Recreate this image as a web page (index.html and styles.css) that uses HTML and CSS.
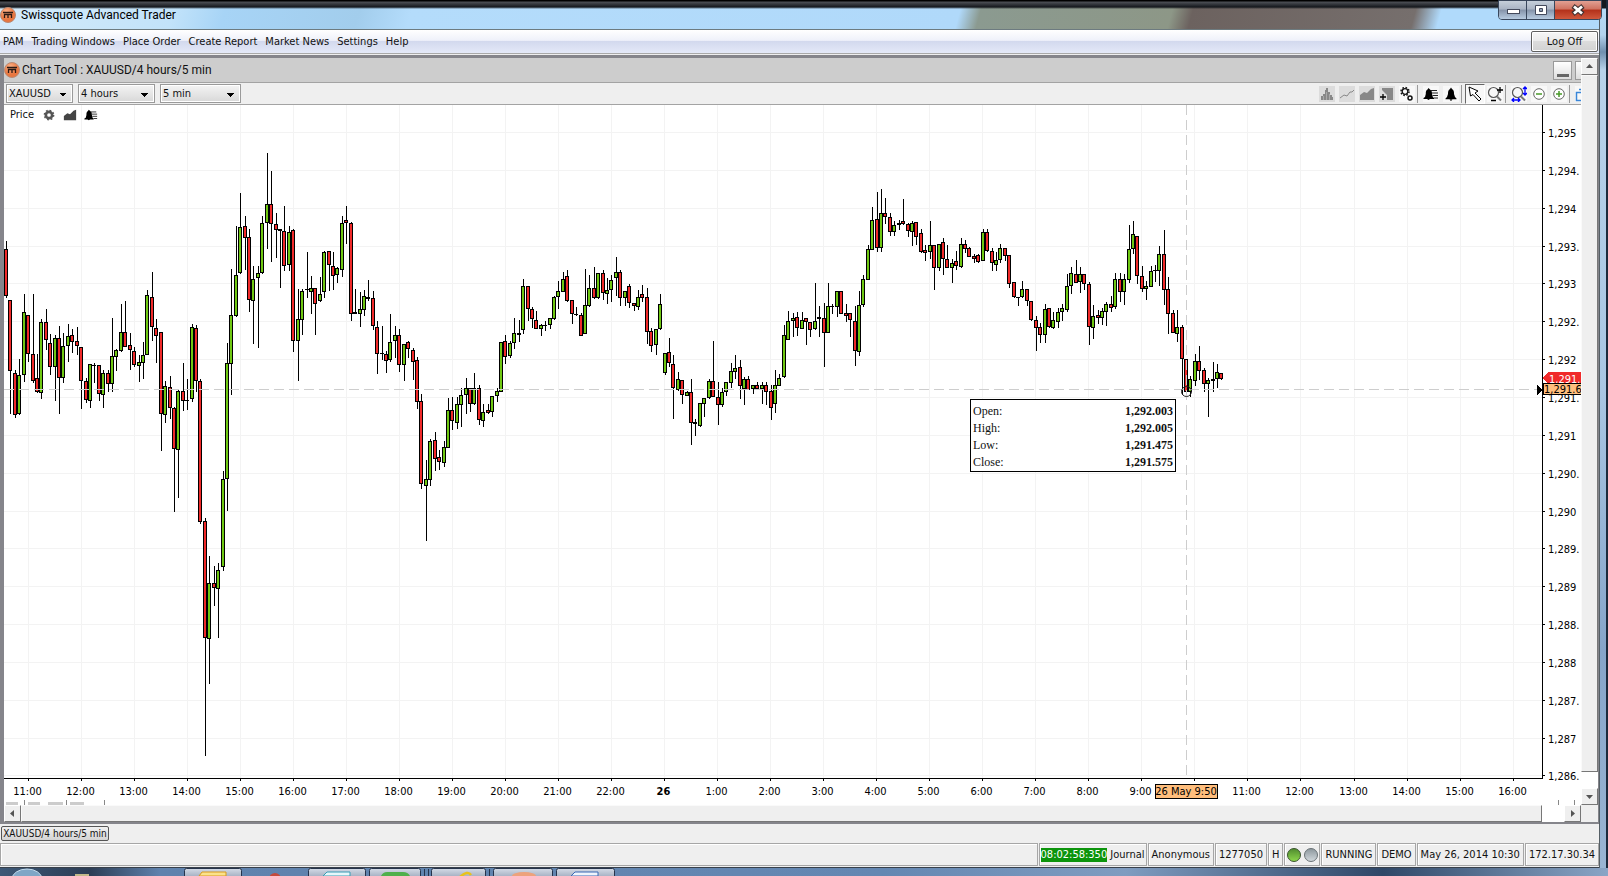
FILE: index.html
```html
<!DOCTYPE html>
<html lang="en">
<head>
<meta charset="utf-8">
<title>Swissquote Advanced Trader</title>
<link rel="stylesheet" href="styles.css">
</head>
<body>
<svg class="defs" aria-hidden="true">
  <defs>
    <radialGradient id="orange" cx="40%" cy="30%"><stop offset="0" stop-color="#ffb48a"/><stop offset="1" stop-color="#e8763f"/></radialGradient>
    <linearGradient id="green" x2="0" y2="1"><stop offset="0" stop-color="#4f8a2f"/><stop offset="1" stop-color="#8ed84c"/></linearGradient>
    <linearGradient id="silver" x2="0" y2="1"><stop offset="0" stop-color="#8b969c"/><stop offset="1" stop-color="#d3dade"/></linearGradient>
    <linearGradient id="taskbtn" x2="0" y2="1"><stop offset="0" stop-color="#d4dbe6"/><stop offset="1" stop-color="#8e9cb2"/></linearGradient>
    <symbol id="logo" viewBox="0 0 16 16"><circle cx="8" cy="8" r="7.500" fill="url(#orange)" stroke="#b98a74"/><path d="M3 5.500h10M4.500 7v4M8 7v4M11.500 7v4M4 7.500h8" stroke="#2b1a14" stroke-width="1.300" fill="none"/></symbol>
    <symbol id="bell" viewBox="0 0 16 16"><path d="M8 1.500 9 3c2 1 2 3 2 5l1 3 1.500 1.500v.8h-11v-.8L4 11l1-3c0-2 0-4 2-5zM6.500 13.500h3l-1.500 1.500z"/></symbol>
    <symbol id="belllist" viewBox="0 0 16 16"><path d="M5.500 2 7 3.500c2 1 2 3 2 4.500l.8 3 1.200 1v1H7l-1.500 1L4 13H.500v-1l1.500-1 .8-3c0-2 0-3.500 1.700-4.500z"/><path d="M8 4.500h6M9 7h6M9.500 9.500H15M11 12h4" stroke="#222" stroke-width="1"/></symbol>
    <symbol id="area" viewBox="0 0 16 16"><path d="M1 14V9l4-3 3 1 4-4 3-1v12z"/></symbol>
    <symbol id="glass" viewBox="0 0 16 16"><circle cx="6.500" cy="6.500" r="5" fill="none" stroke="#555" stroke-width="1.200"/><path d="M10 10.500 14 14.500" stroke="#777" stroke-width="2"/></symbol>
  </defs>
</svg>
<div class="desktop">
  <div class="window">
    <header class="titlebar">
      <svg class="logo"><use href="#logo"/></svg>
      <span class="title">Swissquote Advanced Trader</span>
      <div class="winbuttons">
        <button class="wb" aria-label="Minimize"><svg viewBox="0 0 28 18"><rect x="8.500" y="8.500" width="12" height="4" fill="#fff" stroke="#444a5c"/></svg></button>
        <button class="wb" aria-label="Restore"><svg viewBox="0 0 28 18"><path d="M8.500 4.500h11v9h-11zM12.500 7.500h3v3h-3z" fill="#fff" fill-rule="evenodd" stroke="#444a5c"/></svg></button>
        <button class="wb close" aria-label="Close"><svg viewBox="0 0 28 18"><path d="m9 5 10 8m0-8L9 13" stroke="#433" stroke-width="5"/><path d="m10 5.500 8 7m0-7-8 7" stroke="#fff" stroke-width="2.800"/></svg></button>
      </div>
    </header>
    <nav class="menubar">
      <button>PAM</button><button>Trading Windows</button><button>Place Order</button><button>Create Report</button><button>Market News</button><button>Settings</button><button>Help</button>
      <button class="logoff">Log Off</button>
    </nav>
    <main class="frame">
      <section class="tool">
        <div class="tooltitle">
          <svg class="logo"><use href="#logo"/></svg>
          <h1>Chart Tool : XAUUSD/4 hours/5 min</h1>
          <button class="mini" aria-label="Minimize chart"></button>
          <button class="mini cut" aria-label="Maximize chart"></button>
        </div>
        <div class="toolbar">
          <select class="s1" aria-label="Instrument"><option>XAUUSD</option></select>
          <select class="s2" aria-label="Range"><option>4 hours</option></select>
          <select class="s3" aria-label="Interval"><option>5 min</option></select>
          <div class="icons">
            <button class="ib off" aria-label="Bars"><svg viewBox="0 0 16 16"><path d="M2 14v-4h2V8h2V4h1V2h2v4h2v3h2v2h1v3z" fill="#888"/><path d="M4.500 10v4M7.500 6v8M10.500 8v6" stroke="#aaa"/></svg></button>
            <button class="ib off" aria-label="Line"><svg viewBox="0 0 16 16"><path d="m1 12 4-3 3 1 3-4h2l2-2" fill="none" stroke="#888"/></svg></button>
            <button class="ib off" aria-label="Area"><svg fill="#888"><use href="#area"/></svg></button>
            <button class="ib off" aria-label="Add study"><svg viewBox="0 0 16 16"><path d="M3 2h11v12H8V9L3 4z" fill="#888"/><path d="M4 8v6M1 11h6" stroke="#000" stroke-width="1.300"/></svg></button>
            <button class="ib" aria-label="Settings"><svg viewBox="0 0 16 16" fill="none" stroke="#111"><circle cx="6" cy="5.500" r="4" stroke-width="1.500" stroke-dasharray="1.600 1.540"/><circle cx="6" cy="5.500" r="2.800" stroke-width="1.300"/><circle cx="11" cy="12" r="2" stroke-width="1.500"/></svg></button>
            <i class="sep"></i>
            <button class="ib" aria-label="Alert list"><svg><use href="#belllist"/></svg></button>
            <button class="ib" aria-label="Alert"><svg><use href="#bell"/></svg></button>
            <i class="sep"></i>
            <button class="ib picked" aria-label="Select"><svg viewBox="0 0 16 16"><path d="m2 1 1.500 9L6 8.500l6 6.500 2-2-6-6L11 5z" fill="#fff" stroke="#000"/></svg></button>
            <button class="ib" aria-label="Zoom"><svg viewBox="0 0 16 16"><use href="#glass"/><path d="M13 1v6M10 4h6M4 14.500h5" stroke="#000" stroke-width="1.300"/></svg></button>
            <i class="sep"></i>
            <button class="ib" aria-label="Fit"><svg viewBox="0 0 16 16"><use href="#glass"/><path d="M14 1v8m-2-6 2-2 2 2m-4 4 2 2 2-2M1 14h8m-6-2-2 2 2 2m4-4 2 2-2 2" stroke="#00f" stroke-width="1.300" fill="none"/></svg></button>
            <button class="ib" aria-label="Zoom out"><svg viewBox="0 0 16 16"><circle cx="8" cy="8" r="5.300" fill="#fff" stroke="#666"/><path d="M5 8h6" stroke="#4a9a2a" stroke-width="1.500"/></svg></button>
            <button class="ib" aria-label="Zoom in"><svg viewBox="0 0 16 16"><circle cx="8" cy="8" r="5.300" fill="#fff" stroke="#666"/><path d="M5 8h6M8 5v6" stroke="#4a9a2a" stroke-width="1.500"/></svg></button>
            <i class="sep"></i>
            <button class="ib part" aria-label="Detach"><svg viewBox="0 0 6 16"><path d="M6 6.500H1.500v8H6M4 3.500h2" stroke="#3a86d8" fill="none" stroke-width="1.500"/></svg></button>
          </div>
        </div>
        <div class="chart">
          <svg class="plot" id="plot" role="img" aria-label="XAUUSD candlestick chart"></svg>
          <svg class="yaxis" id="yaxis"></svg>
          <svg class="xaxis" id="xaxis"></svg>
          <div class="legend">
            <span>Price</span>
            <svg viewBox="0 0 16 16"><circle cx="8" cy="8" r="3.600" fill="none" stroke="#555" stroke-width="3"/><circle cx="8" cy="8" r="5.400" fill="none" stroke="#555" stroke-width="1.500" stroke-dasharray="2 2.240"/></svg>
            <svg fill="#444"><use href="#area"/></svg>
            <svg><use href="#belllist"/></svg>
          </div>
          <dl class="tip">
            <dt>Open:</dt><dd>1,292.003</dd>
            <dt>High:</dt><dd>1,292.005</dd>
            <dt>Low:</dt><dd>1,291.475</dd>
            <dt>Close:</dt><dd>1,291.575</dd>
          </dl>
        </div>
      </section>
      <div class="vscroll">
        <button class="sb" aria-label="Scroll up"><svg viewBox="0 0 15 15"><path d="M4 9h7L7.500 5z"/></svg></button>
        <div class="thumb"></div><div class="gap"></div>
        <button class="sb" aria-label="Scroll down"><svg viewBox="0 0 15 15"><path d="M4 6h7L7.500 10z"/></svg></button>
      </div>
      <div class="hscroll">
        <button class="sb" aria-label="Scroll left"><svg viewBox="0 0 15 15"><path d="M9 4v7L5 7.500z"/></svg></button>
        <div class="thumb"></div><div class="gap"></div>
        <button class="sb" aria-label="Scroll right"><svg viewBox="0 0 15 15"><path d="M6 4v7l4-3.500z"/></svg></button>
      </div>
      <div class="corner"></div>
    </main>
    <div class="tabs"><button>XAUUSD/4 hours/5 min</button></div>
    <footer class="status">
      <span class="cell fill"></span>
      <span class="cell journal"><mark>08:02:58:350</mark> Journal</span>
      <span class="cell">Anonymous</span>
      <span class="cell">1277050</span>
      <span class="cell">H</span>
      <span class="cell lights"><svg viewBox="0 0 32 16"><circle cx="8" cy="8" r="6.500" fill="url(#green)" stroke="#3c5530"/><circle cx="25" cy="8" r="6.500" fill="url(#silver)" stroke="#6a7276"/></svg></span>
      <span class="cell">RUNNING</span>
      <span class="cell">DEMO</span>
      <span class="cell">May 26, 2014 10:30</span>
      <span class="cell">172.17.30.34</span>
    </footer>
  </div>
  <div class="edge"></div>
</div>
<div class="taskbar">
  <svg aria-hidden="true">
    <ellipse cx="27" cy="11" rx="15" ry="10" fill="#7fa6c6" stroke="#c5dcec"/>
    <path d="M75 8V6h14v2z" fill="#c2b98a"/>
    <g fill="url(#taskbtn)" stroke="#26344c"><rect x="184.500" y=".5" width="57" height="12" rx="2"/><rect x="308.500" y=".5" width="57" height="12" rx="2"/><rect x="369.500" y=".5" width="51" height="12" rx="2"/><rect x="431.500" y=".5" width="54" height="12" rx="2"/><rect x="493.500" y=".5" width="59" height="12" rx="2"/><rect x="556.500" y=".5" width="58" height="12" rx="2"/></g>
    <path d="M424.500 1v8M428.500 1v8M489.500 1v8" stroke="#26344c"/>
    <path d="M199 8l3-4h24v4z" fill="#fbe28a" stroke="#d99a1e"/>
    <circle cx="275" cy="11" r="6" fill="#c44a3c"/>
    <path d="M323 8l4-4h23v4z" fill="#e6f7fa" stroke="#3a9db5"/>
    <path d="M381 8q2-4 6-4h16q5 0 7 4z" fill="#4fb04c"/>
    <path d="M460 9q8-7 11-2" stroke="#e8c21c" stroke-width="2.500" fill="none"/>
    <ellipse cx="524" cy="8" rx="12" ry="4" fill="#eda27c"/>
    <path d="M571 8l4-4h23v4z" fill="#eef4fc" stroke="#3a68b5"/>
  </svg>
</div>
<script src="chart.js"></script>
</body>
</html>
```
FILE: styles.css
```css
* { box-sizing: border-box; }
body {
  margin: 0; height: 100vh; display: flex; flex-direction: column; overflow: hidden;
  background: #efefef; color: #111;
  font: 11px/14px "DejaVu Sans Condensed", "Open Sans", sans-serif;
}
button, select { font: inherit; color: inherit; margin: 0; padding: 0; border: 0; background: none; border-radius: 0; }
svg { display: block; }
.defs { position: absolute; width: 0; height: 0; }
.desktop { flex: 1; min-height: 0; display: flex; }
.window { flex: 1; min-width: 0; display: flex; flex-direction: column; }
.edge { width: 9px; border-left: 1px solid #555f66; border-right: 2px solid #1c2a3c; background: linear-gradient(#14181f 0 8px, #b5daf6 9px, #b4d3ee 35px, #6f8fae 52px, #b8d2ea 70px, #a9c6e3 45%, #86a5ca 75%, #9ab5d3); }
.logo { width: 16px; height: 16px; flex: none; }

.titlebar {
  height: 30px; flex: none; display: flex; align-items: center; gap: 5px; border-bottom: 1px solid #6d7b80;
  position: relative; z-index: 1;
  background:
    linear-gradient(#000 0 1px, #4c4f55 2px, #15181d 7px, transparent 9px),
    linear-gradient(105deg, #d5ebfa 0, #c2e3fa 170px, #a7d4f6 220px, #a2cdec 350px, #b4dcfb 400px, #b0d9fa 930px, #8b9a90 950px, #8d9787 1135px, #6c625f 1155px, #766f6d 1370px, #b0dafb 1395px);
}
.title { font: 12px/16px Roboto, "Open Sans", sans-serif; color: #000; }
.winbuttons { margin: 0 -3px 0 auto; align-self: flex-start; display: flex; border: 1px solid #39475c; border-radius: 0 0 4px 4px; overflow: hidden; }
.wb { width: 28px; height: 18px; border-right: 1px solid #39475c; background: linear-gradient(#c6cfda, #a9b4c4 45%, #8593a9 50%, #b7cbe0); }
.wb svg { width: 28px; height: 18px; }
.wb.close { width: 46px; border: 0; background: linear-gradient(#e2a093, #cf7260 45%, #b3301a 50%, #d0583c); display: flex; justify-content: center; }

.menubar { height: 24px; flex: none; display: flex; align-items: center; gap: 8px; padding-left: 3px; border-bottom: 1px solid #a9a9a9; background: linear-gradient(#fff, #eff1fa 45%, #d3d9ee 50%, #e4e9f8); }
.logoff { margin-left: auto; margin-right: 1px; width: 67px; height: 21px; border: 1px solid #5f5f5f; border-radius: 2px; background: linear-gradient(#f6f6f6, #ececec 45%, #dcdcdc 50%, #d2d2d2); box-shadow: inset 0 0 0 1px #fff; }

.frame { flex: 1; min-height: 0; margin-top: 1px; border: solid #85858b; border-width: 3px 1px 2px 4px; display: grid; grid-template: minmax(0, 1fr) 17px / minmax(0, 1fr) 17px; }
.tool { display: flex; flex-direction: column; min-width: 0; min-height: 0; overflow: hidden; background: #fff; }
.tooltitle { height: 24px; flex: none; display: flex; align-items: center; background: #cdcdcd; }
.tooltitle h1 { margin: 0 auto 0 2px; font: 12px/16px Roboto, "Open Sans", sans-serif; }
.mini { width: 19px; height: 19px; flex: none; margin-right: 3px; border: 1px solid #999; background: linear-gradient(#666, #666) center 12px / 12px 3px no-repeat, linear-gradient(#fff, #ddd); }
.mini.cut { width: 6px; margin-right: 0; border-right: 0; background: linear-gradient(#fff, #ddd); }
.toolbar { height: 23px; flex: none; display: flex; align-items: center; gap: 5px; padding-left: 2px; border: solid #a3a3a3; border-width: 1px 0; background: #efefef; }
.toolbar select { height: 19px; padding: 0 2px; appearance: none; border: 1px solid #9a9a9a; box-shadow: inset 0 0 0 1px #fff;
  background: linear-gradient(135deg, #000 50%, transparent 50%) right 5px top 8px / 4px 4px no-repeat, linear-gradient(225deg, #000 50%, transparent 50%) right 9px top 8px / 4px 4px no-repeat, linear-gradient(#f4f4f4, #d8d8d8); }
.toolbar .s1 { width: 67px; }
.toolbar .s2 { width: 77px; }
.toolbar .s3 { width: 81px; }
.icons { margin-left: auto; display: flex; align-items: center; }
.ib { width: 16px; height: 16px; margin: 0 2px; flex: none; background: #f8f8f8; }
.ib svg { width: 16px; height: 16px; }
.ib.off { background: #dcdcdc; }
.ib.picked { width: 20px; height: 20px; margin: 0; padding: 1px; border: 1px solid #666; border-right-color: #fff; border-bottom-color: #fff; }
.ib.part, .ib.part svg { width: 6px; margin-right: 0; }
.sep { width: 4px; height: 18px; border-left: 1px solid #999; }

.chart { flex: 1; min-height: 0; position: relative; display: grid; grid-template: minmax(0, 1fr) 27px / minmax(0, 1fr) 39px; }
.plot, .yaxis, .xaxis { width: 100%; height: 100%; overflow: hidden; min-width: 0; min-height: 0; shape-rendering: crispEdges; }
.yaxis { overflow: visible; }
.xaxis { grid-column: 1 / 3; }
.chart text { font-size: 11px; fill: #000; }
.chart .day { font-weight: bold; }
.chart .mid { text-anchor: middle; }
.chart .light { fill: #fff; }
.grid { stroke: #f3f3f3; }
.axis { stroke: #000; }
.body { stroke: #000; }
.g { fill: #6fc813; }
.r { fill: #f02a2a; }
.k { fill: #000; }
.cross { stroke: #cdcdcd; stroke-dasharray: 10 5; }
.ring { fill: none; stroke: #222; shape-rendering: auto; }
.legend { position: absolute; left: 6px; top: 3px; display: flex; align-items: center; gap: 5px; }
.legend span { width: 26px; }
.legend svg { width: 16px; height: 14px; }
.tip { position: absolute; left: 966px; top: 294px; width: 206px; margin: 0; padding: 3px 2px 0; border: 1px solid #000; background: #fff; display: grid; grid-template-columns: 1fr auto; font: 12px/17px "Liberation Serif", serif; }
.tip dd { margin: 0; font-weight: bold; }

.vscroll, .hscroll { display: flex; background: #fff; }
.vscroll { flex-direction: column; }
.sb { width: 17px; height: 17px; flex: none; display: flex; align-items: center; justify-content: center; background: #efefef; border: 1px solid #fff; border-right-color: #777; border-bottom-color: #777; }
.sb svg { width: 15px; height: 15px; fill: #555; }
.thumb { flex: 1; background: #efefef; border: 1px solid #fafafa; border-right-color: #777; border-bottom-color: #777; }
.vscroll .gap { height: 16px; }
.hscroll .gap { width: 22px; }
.corner { background: #efefef; }
.tabs { height: 19px; flex: none; display: flex; align-items: center; padding-left: 1px; }
.tabs button { height: 15px; width: 108px; border: 1px solid #555; border-radius: 2px; line-height: 12px; font-size: 10px; background: linear-gradient(#f0f0f0, #d4d4d4); white-space: nowrap; }
.status { height: 25px; flex: none; display: flex; gap: 1px; padding-bottom: 1px; border-bottom: 1px solid #38404a; }
.cell { padding: 0 3px; border: 1px solid #a6a6a6; display: flex; align-items: center; white-space: pre; box-shadow: inset 1px 1px #fff; }
.cell.fill { flex: 1; }
.journal { padding: 0 1px; }
.journal mark { background: #0c940c; color: #fff; }
.lights { padding: 0 1px; }
.lights svg { width: 32px; height: 16px; }
.taskbar { height: 8px; flex: none; overflow: hidden; background: linear-gradient(90deg, #3d5876, #2c3d55 90px, #5f82ad 160px, #6487b2 55%, #7f9cc0 70%, #2f4767 86%, #8aa5c6); }
.taskbar svg { width: 100%; height: 8px; }
```
FILE: chart.js
```js
// Candles: high, body top, body bottom, low (thirds of a pixel below the segment's base) and body kind:
// g = rising, r = falling, k = unchanged.
const segments = [
  { base: 25, data: `
333 357 498 504 r|510 510 723 852 r|720 729 855 864 r|687 735 852 855 g|492 546 735 756 g|555 555 672 696 r
492 672 753 759 r|672 744 786 789 r|567 576 789 807 g|537 576 630 660 r|612 639 711 735 r|615 624 711 813 g
588 624 744 852 r|609 648 744 759 g|582 618 648 696 g|597 615 636 669 r|591 633 648 675 r|651 651 753 837 r
744 753 810 819 r|702 702 813 834 g|699 705 708 759 k|705 705 792 813 r|720 729 795 834 g|720 729 762 786 r
564 678 762 786 g|657 660 681 723 g|522 606 663 666 g|513 606 651 651 r|609 645 660 720 r|651 663 705 711 r
675 696 708 756 g|636 675 699 747 g|480 495 675 675 g|426 501 591 633 r|567 594 618 699 r|606 606 852 963 r
753 768 855 879 g|738 771 834 867 r|831 834 957 1146 r|780 783 960 1104 g|699 783 813 843 r|747 810 813 840 k
582 591 807 816 g|585 594 753 786 r|747 753 1176 1182 r|1164 1173 1524 1878 r|1278 1359 1527 1662 g|1308 1359 1374 1428 r
1299 1320 1377 1524 g|1023 1047 1311 1323 g|639 699 1047 1143 g|417 555 702 795 g|288 435 558 561 g|189 291 429 432 g
258 288 324 420 r|297 321 510 546 r|408 447 513 642 g|408 429 444 654 g|258 279 429 432 g|69 222 279 357 g
123 222 282 396 r|249 282 300 384 r|297 297 303 474 k|228 303 408 423 r|288 306 405 423 g|297 300 633 666 r
477 567 633 753 g|477 483 570 615 g|366 477 480 504 k|438 474 486 552 g|474 474 522 615 r|441 492 513 516 g
363 366 486 504 g|363 363 405 483 r|366 408 438 480 r|411 414 435 459 g|258 279 420 441 g|228 270 279 342 r
276 279 552 573 r|477 546 552 552 k|486 537 552 591 g|480 498 540 558 g|450 501 507 513 k|483 504 588 600 r
573 591 672 732 r|588 669 672 690 k|663 672 693 729 r|552 636 690 696 g|588 615 633 684 g|597 615 705 726 r
642 642 705 753 g|633 636 657 684 r|654 660 696 750 r|681 690 816 837 r|792 813 1062 1077 r|990 1047 1068 1233 g
927 933 1050 1068 g|906 930 987 1023 r|960 981 996 1020 r|933 951 999 1011 g|804 840 954 954 g|801 840 873 900 r
801 822 879 897 g` },
  { base: 115, data: `
504 525 555 621 g|474 504 525 582 g|504 504 552 576 r|459 504 552 555 g|495 504 600 615 r|552 576 603 621 g
552 570 579 582 r|528 528 576 591 g|504 513 528 546 g|366 366 516 516 g|345 363 411 432 r|363 369 408 414 g
294 339 369 387 g|300 339 345 366 k|177 198 330 342 g|198 198 267 303 r|261 267 297 324 r|273 300 327 327 r
312 315 327 348 g|303 315 318 333 k|294 294 315 327 g|228 231 297 300 g|183 213 231 267 g|156 177 216 216 g
150 168 243 246 r|240 240 282 312 r|261 282 285 288 k|279 285 348 348 r|147 255 342 342 g|165 204 258 261 g
141 204 234 237 r|159 159 234 237 g|150 159 219 240 r|174 210 222 252 g|165 180 210 246 g|111 156 174 228 g
150 156 234 258 r|213 213 234 258 g|192 198 249 264 r|249 249 258 273 r|210 231 261 270 g|195 222 234 246 r
204 231 336 372 r|324 333 378 396 r|327 327 375 405 g|222 252 327 330 g|399 399 459 465 g` },
  { base: 75, data: `
474 516 549 561 r|525 552 624 717 r|576 597 630 633 g|600 600 645 672 r|633 636 648 648 g|597 636 729 795 r
717 726 732 768 k|669 669 738 741 g|654 654 672 711 g|597 603 654 657 g|483 603 651 651 r|606 651 675 735 r
624 636 675 681 g|606 606 636 648 g|549 573 609 624 g|525 564 576 597 g|540 561 618 657 r|591 597 627 675 g
588 597 630 630 r|615 615 627 642 g|606 615 627 627 r|606 615 627 672 g|606 615 636 675 r|615 633 684 720 r
570 615 672 699 g|582 594 618 618 g|435 465 591 594 g|393 423 480 480 g|399 414 423 471 g|396 411 444 468 r
396 420 447 447 g|414 414 426 495 r|426 426 450 471 r|309 423 447 450 g|378 411 417 471 k|369 414 459 561 r
309 378 459 459 g|372 378 381 402 k|333 333 381 411 g|333 333 402 402 r|372 399 408 426 r|399 399 420 471 r
378 423 513 558 r|333 375 516 528 g|285 297 375 381 g|195 207 300 300 g|81 120 210 210 g` },
  { base: 65, data: `
66 147 234 246 r|57 129 234 246 g|84 129 141 162 r|129 141 186 198 r|153 165 186 198 g|150 159 165 180 k
87 153 162 165 r|159 162 183 201 r|153 159 186 228 g|156 156 201 225 r|177 189 246 249 r|225 240 249 273 r
153 225 246 267 g|225 225 294 360 r|222 222 294 303 g|204 216 267 315 r|225 267 294 294 r|267 279 294 339 g
243 273 288 300 r|204 222 291 294 g|210 222 237 249 r|231 234 261 261 r|252 258 267 279 r|252 255 276 279 r
177 186 273 273 g|177 186 243 246 r|234 243 279 303 r|246 270 285 303 g|222 234 270 279 g|234 234 258 273 r
255 255 342 354 r|336 336 381 384 r|381 381 384 408 k|333 357 381 384 g|357 357 393 408 r|393 393 450 453 r
438 450 474 543 r|459 471 495 519 r|402 417 495 519 g|414 414 471 474 r|426 450 474 477 g|414 426 456 474 g
402 414 426 453 g|312 348 420 426 g` },
  { base: 95, data: `
201 219 258 282 g|180 222 249 249 r|201 222 246 279 g|222 222 252 270 r|246 252 381 435 r|315 348 384 417 g
330 345 354 372 r|324 333 354 375 g|306 312 336 378 g|288 312 324 336 r|219 237 321 327 g|219 237 276 306 r
222 237 276 315 g|75 147 240 249 g|63 102 147 162 g|108 108 228 252 r|198 228 267 276 r|243 258 267 300 g
198 213 261 261 g|195 210 213 246 k|138 162 213 258 g|90 162 270 315 r|231 267 342 402 r|330 339 399 399 r
330 381 402 426 g|375 381 477 585 r|477 477 576 585 r|528 537 576 591 g|462 483 543 558 g|438 483 513 540 r
504 510 552 576 r|534 540 552 651 g|486 537 543 576 k|492 516 537 564 g|519 519 537 540 r` }
];

const line = (cls, x1, y1, x2, y2) => `<line class="${cls}" x1="${x1}" y1="${y1}" x2="${x2}" y2="${y2}"/>`;
const STEP = 4.4195;
const hours = [];
for (let i = 0; i < 29; i++) {
  const name = i < 12 ? `${11 + i}:00` : i === 12 ? "26" : `${i - 12}:00`;
  hours.push({ x: Math.round(24 + 53.02 * i) + 0.5, name });
}
const levels = [];
for (let i = 0; i < 18; i++) {
  const whole = Math.ceil(1295 - i / 2 - 0.5);
  levels.push({ y: Math.round(27 + 37.85 * i) + 0.5, name: `1,${String(whole).slice(1)}${i % 2 ? "." : ""}` });
}

let out = "";
hours.forEach(h => { out += line("grid", h.x, 0, h.x, "100%"); });
levels.forEach(l => { out += line("grid", 0, l.y, "100%", l.y); });
let n = 0;
segments.forEach(seg => {
  seg.data.trim().split(/[|\n]/).forEach(item => {
    const parts = item.trim().split(" ");
    const [hi, top, bottom, lo] = parts.slice(0, 4).map(v => seg.base + Math.round(v / 3));
    const x = Math.round(STEP * n++);
    out += `<rect class="k" x="${x + 2}" y="${hi}" width="1" height="${lo - hi}"/>`;
    if (parts[4] === "k") {
      out += `<rect class="k" x="${x}" y="${top}" width="4" height="${bottom - top}"/>`;
    } else {
      out += `<rect class="body ${parts[4]}" x="${x + 0.5}" y="${top + 0.5}" width="3" height="${bottom - top - 1}"/>`;
    }
  });
});
out += line("cross", 0, 284.5, "100%", 284.5) + line("cross", 1182.5, 0, 1182.5, "100%");
out += '<circle class="ring" cx="1182.5" cy="286.500" r="5"/>';
out += '<svg x="100%" y="279" overflow="visible"><path class="k" d="M-5 1v10l5-5z"/></svg>';
document.getElementById("plot").innerHTML = out;

out = line("axis", 0.5, 0, 0.5, "100%");
levels.forEach(l => { out += line("axis", 0, l.y, 3, l.y) + `<text x="6" y="${l.y + 4}">${l.name}</text>`; });
out += '<path class="r" d="M1 273l5-6h33v12H6z"/><text class="light" x="7" y="278">1,291.</text>';
out += '<rect x="1.500" y="278.500" width="40" height="11" fill="#ffbe7d" stroke="#000"/><text x="2" y="288">1,291.6</text>';
document.getElementById("yaxis").innerHTML = out;

out = '<rect class="k" width="1539" height="1"/>';
hours.forEach(h => {
  out += line("axis", h.x, 0, h.x, 3) + `<text class="mid${h.name === "26" ? " day" : ""}" x="${h.x - 1}" y="17">${h.name}</text>`;
});
out += '<rect x="1151.500" y="6.500" width="62" height="14" fill="#ffbe7d" stroke="#000"/><text class="mid" x="1182" y="17">26 May 9:50</text>';
out += '<g fill="#ccc"><rect x="2" y="24" width="12" height="3"/><rect x="24" y="24" width="12" height="3"/><rect x="44" y="24" width="15" height="3"/><rect x="66" y="24" width="14" height="3"/></g>';
out += '<path stroke="#888" d="M20.500 22v5M62.500 22v5M100.500 22v5M1554.500 22v5M1570.500 22v5"/>';
document.getElementById("xaxis").innerHTML = out;
```
